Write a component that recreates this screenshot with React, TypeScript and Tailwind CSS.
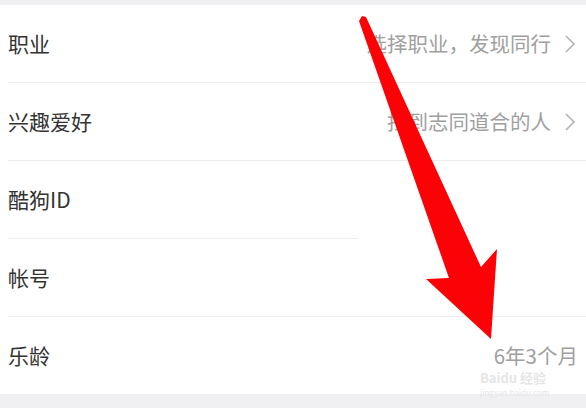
import React from 'react';

const font = { fontFamily: '"Noto Sans CJK SC", "Noto Sans", sans-serif' };

type Row = { label: string; value?: string; chevron?: boolean; divider?: 'full' | 'short' | 'none' };

const rows: Row[] = [
  { label: '职业', value: '选择职业，发现同行', chevron: true, divider: 'full' },
  { label: '兴趣爱好', value: '找到志同道合的人', chevron: true, divider: 'full' },
  { label: '酷狗ID', divider: 'short' },
  { label: '帐号', divider: 'full' },
  { label: '乐龄', value: '6年3个月', divider: 'none' },
];

function Chevron() {
  return (
    <svg width="12" height="18" viewBox="0 0 12 18" className="ml-[13px] mr-[2px]">
      <polyline points="2,1 10,9 2,17" fill="none" stroke="#b4b4b4" strokeWidth="1.6" />
    </svg>
  );
}

export default function App() {
  return (
    <div className="relative w-[586px] h-[408px] overflow-hidden bg-[#f0f0f2]" style={font}>
      <div className="h-[5px]" />
      <div className="bg-white">
        {rows.map((row) => (
          <div key={row.label}>
            <div className="h-[77px] flex items-center pl-2 pr-2">
              <span className="text-[21px] text-[#333333] leading-none">{row.label}</span>
              <div className="flex-1" />
              {row.value && (
                <span className="text-[20.5px] text-[#a0a0a0] leading-none">{row.value}</span>
              )}
              {row.chevron && <Chevron />}
            </div>
            {row.divider === 'full' && <div className="h-px ml-2 bg-[#ececec]" />}
            {row.divider === 'short' && <div className="h-px ml-2 w-[350px] bg-[#ececec]" />}
          </div>
        ))}
      </div>

      {/* watermark */}
      <div className="absolute left-[480px] top-[371px] flex flex-col gap-[5px] text-[#e6e6e6] whitespace-nowrap pointer-events-none">
        <div className="text-[13px] font-bold leading-[13px]">Baidu 经验</div>
        <div className="text-[8px] leading-[8px]">jingyan.baidu.com</div>
      </div>

      {/* red annotation arrow */}
      <svg className="absolute left-0 top-0 pointer-events-none" width="586" height="408" viewBox="0 0 586 408">
        <polygon
          points="359,21 362,16 366,17 481,267 497,249 491,339 426,279 449,278"
          fill="#fb0207"
          strokeLinejoin="round"
        />
      </svg>
    </div>
  );
}
